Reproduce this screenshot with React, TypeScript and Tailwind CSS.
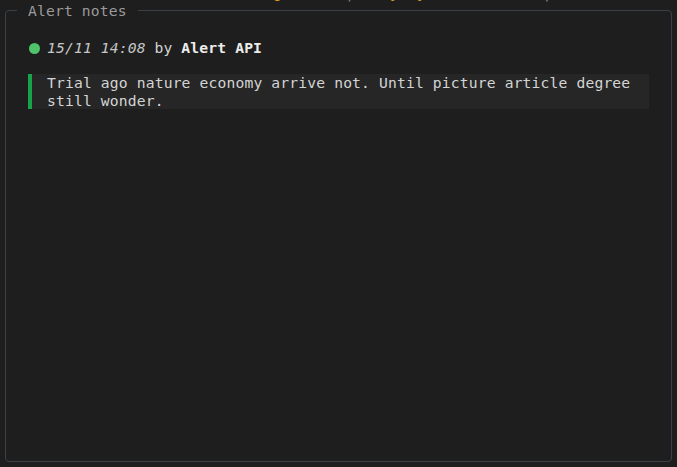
import React from "react";

const mono = { fontFamily: '"DejaVu Sans Mono", "Liberation Mono", monospace' };

// line above the panel, only its descenders peek into view
const prevLine: { ch: string; col: number; cls: string }[] = [
  { ch: "g", col: 27, cls: "text-[#d99a1c]" },
  { ch: "|", col: 35, cls: "text-[#8a8a8a]" },
  { ch: "y", col: 40, cls: "text-[#d99a1c]" },
  { ch: "y", col: 43, cls: "text-[#d99a1c]" },
  { ch: "|", col: 57, cls: "text-[#8a8a8a]" },
];

const PrevLine: React.FC = () => {
  const parts: React.ReactNode[] = [];
  let pos = 0;
  prevLine.forEach((p, i) => {
    parts.push(" ".repeat(p.col - pos));
    parts.push(
      <span key={i} className={p.cls}>
        {p.ch}
      </span>
    );
    pos = p.col + 1;
  });
  return (
    <div className="mt-[-15.6px] pl-[31px] whitespace-pre text-[14.67px] leading-[1.2] tracking-[0.15px]" style={mono}>
      {parts}
    </div>
  );
};

export default function App() {
  return (
    <div className="h-[467px] w-full overflow-hidden bg-[#1e1e1e] flex flex-col tracking-[0.15px]" style={mono}>
      <PrevLine />
      <fieldset className="flex-1 mx-[5px] mb-[5px] border border-[#3b4048] rounded-[4px] px-[22px] pt-[19px] min-h-0">
        <legend className="ml-[-11px] px-[11px] text-[14.67px] leading-[1.2] text-[#9a9a9a]">
          Alert notes
        </legend>
        <div className="flex items-center text-[14.67px] leading-[1.2]">
          <span className="w-[11px] h-[11px] rounded-full bg-[#4ec36b] mt-[2px] ml-[1px]" />
          <span className="ml-[7px] italic text-[#c6c6c6]">15/11 14:08</span>
          <span className="ml-[8.83px] text-[#d4d4d4]">by</span>
          <span className="ml-[8.83px] font-bold text-[#ececec]">Alert API</span>
        </div>
        <div className="mt-[18px] border-l-4 border-[#16a34a] bg-[#262626] pl-[15px] pr-3 text-[14.67px] leading-[1.2] text-[#d4d4d4]">
          Trial ago nature economy arrive not. Until picture article degree still wonder.
        </div>
      </fieldset>
    </div>
  );
}
